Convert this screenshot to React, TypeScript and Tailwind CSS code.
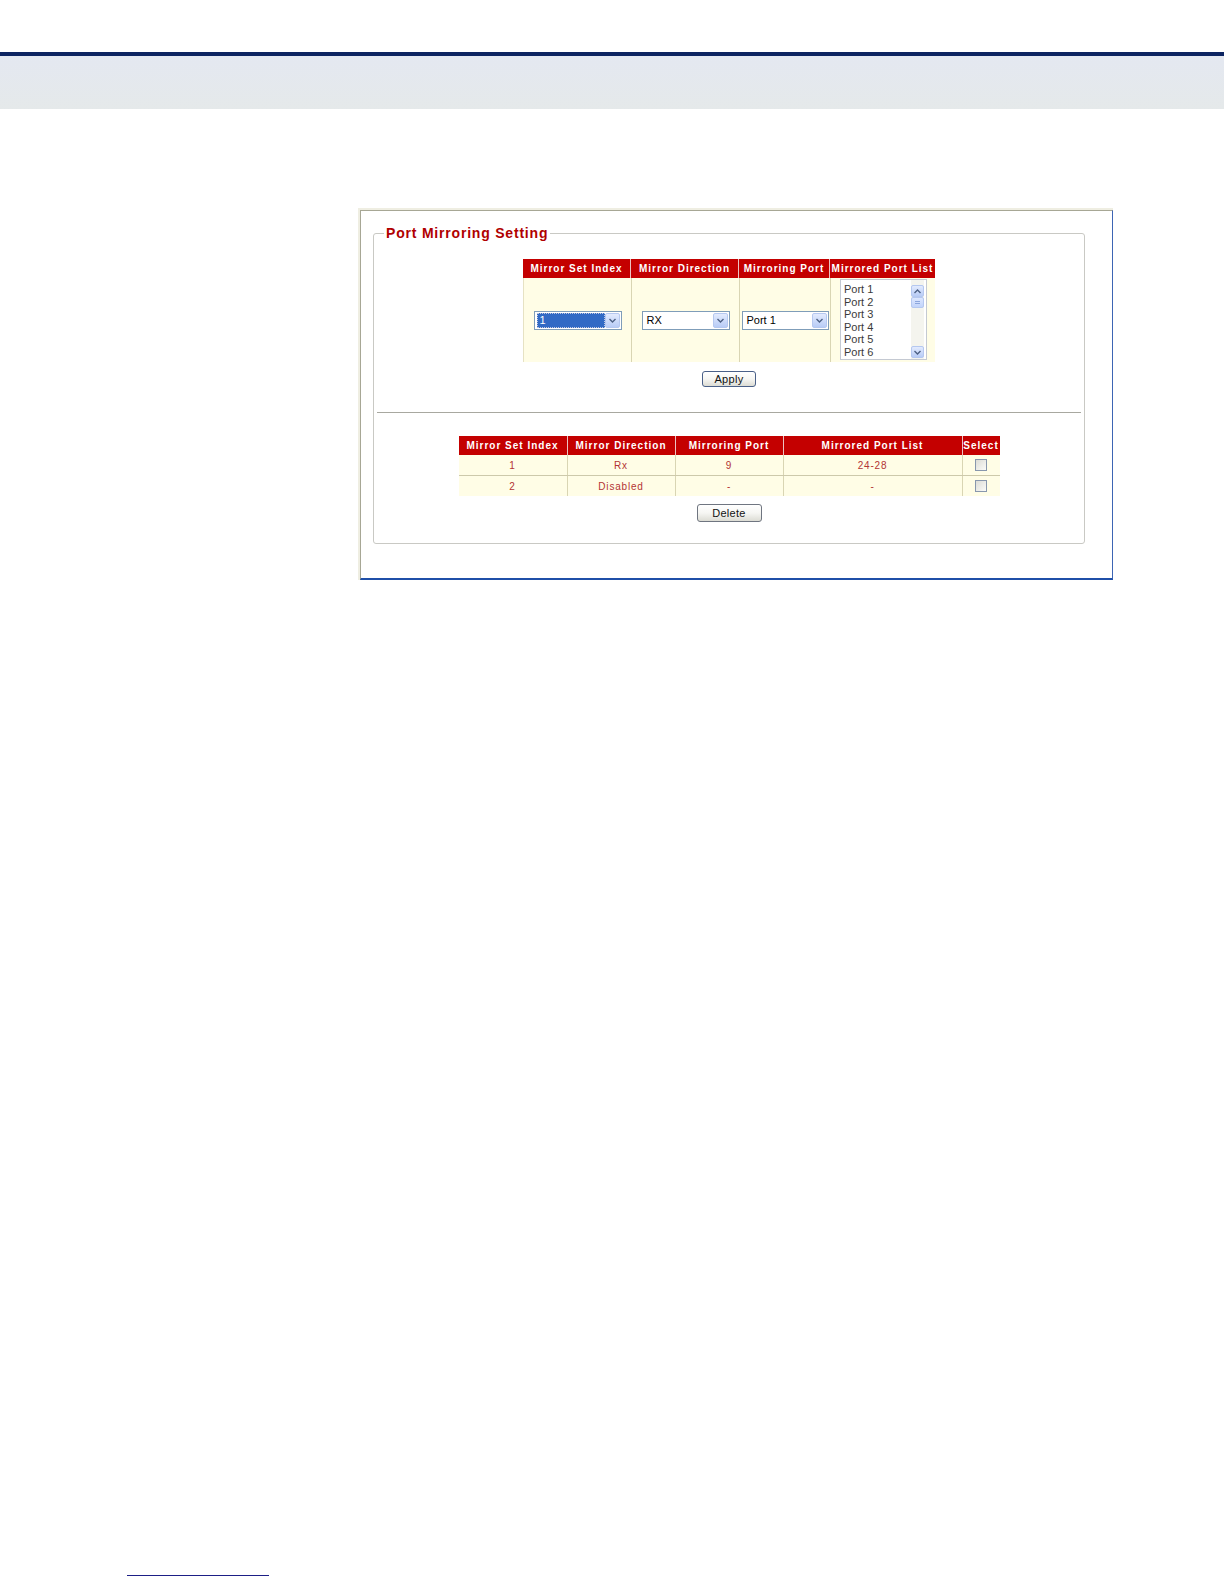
import React from "react";

const F = { fontFamily: '"Liberation Sans", Arial, sans-serif' };

function Chevron({ up = false }: { up?: boolean }) {
  return (
    <svg width="7" height="5" viewBox="0 0 7 5" className="block">
      <path
        d={up ? "M0.5 4 L3.5 1 L6.5 4" : "M0.5 1 L3.5 4 L6.5 1"}
        fill="none"
        stroke="#4d6185"
        strokeWidth="1.4"
      />
    </svg>
  );
}

function ArrowBtn() {
  return (
    <div className="flex h-[15px] w-[15px] shrink-0 items-center justify-center rounded-[2px] border border-[#b5c8f0] bg-gradient-to-b from-[#e3ebfe] to-[#b8ccf6]">
      <Chevron />
    </div>
  );
}

function XPSelect({ value, selected = false, className = "" }: { value: string; selected?: boolean; className?: string }) {
  return (
    <div className={`flex h-[19px] items-center border border-[#7f9db9] bg-white p-[1px] ${className}`}>
      <div className="flex h-full flex-1 items-center pl-[1px]">
        {selected ? (
          <div className="flex h-full w-full items-center border border-dotted border-[#c0c8e0] bg-[#316ac5] pl-[2px] text-[11px] text-white">
            {value}
          </div>
        ) : (
          <div className="pl-[2px] text-[11px] text-black">{value}</div>
        )}
      </div>
      <ArrowBtn />
    </div>
  );
}

function HeadCell({ children, first = false }: { children: React.ReactNode; first?: boolean }) {
  return (
    <div
      className={`flex items-center justify-center overflow-hidden whitespace-nowrap text-[10px] font-bold tracking-[1px] text-white ${first ? "" : "border-l border-[#ecc2c2]"}`}
    >
      {children}
    </div>
  );
}

function Listbox() {
  const ports = ["Port 1", "Port 2", "Port 3", "Port 4", "Port 5", "Port 6"];
  return (
    <div className="flex h-[81px] w-[87px] border border-[#c4c9d2] bg-white">
      <div className="flex-1 overflow-hidden pl-[3px] pt-[3px]">
        {ports.map((p) => (
          <div key={p} className="h-[12.6px] text-[11px] leading-[12.6px] text-[#3a3a3a]">
            {p}
          </div>
        ))}
      </div>
      <div className="mr-[2px] flex w-[13px] flex-col bg-[#f4f4ee] pt-[5px] pb-[1px]">
        <div className="flex h-[12px] w-[13px] items-center justify-center rounded-[2px] border border-[#b5c8f0] bg-gradient-to-b from-[#e3ebfe] to-[#b8ccf6]">
          <Chevron up />
        </div>
        <div className="flex h-[11px] w-[13px] flex-col items-center justify-center gap-[1px] rounded-[2px] border border-[#b5c8f0] bg-gradient-to-b from-[#dde7fe] to-[#c2d4fa]">
          <div className="h-px w-[5px] bg-[#8ca6dd]" />
          <div className="h-px w-[5px] bg-[#8ca6dd]" />
        </div>
        <div className="flex-1" />
        <div className="flex h-[12px] w-[13px] items-center justify-center rounded-[2px] border border-[#b5c8f0] bg-gradient-to-b from-[#e3ebfe] to-[#b8ccf6]">
          <Chevron />
        </div>
      </div>
    </div>
  );
}

function XPButton({ label, className = "", border = "border-[#4a6088]" }: { label: string; className?: string; border?: string }) {
  return (
    <div
      className={`flex items-center justify-center rounded-[3px] border ${border} bg-gradient-to-b from-white via-[#f6f6f3] to-[#dcdcd4] text-[11px] tracking-[0.3px] text-[#111] ${className}`}
    >
      {label}
    </div>
  );
}

function Checkbox() {
  return <div className="h-[12px] w-[12px] border border-[#8897ad] bg-gradient-to-br from-[#dcdcd6] to-[#fbfbf8]" />;
}

export default function App() {
  const dataCls = "flex items-center justify-center text-[10px] tracking-[0.8px] text-[#b33434]";
  const rows = [
    ["1", "Rx", "9", "24-28"],
    ["2", "Disabled", "-", "-"],
  ];
  return (
    <div className="flex min-h-[1584px] w-[1224px] flex-col bg-white" style={F}>
      <div className="h-[52px]" />
      <div className="h-[4px] bg-[#0c2461]" />
      <div className="h-[53px] bg-gradient-to-b from-[#e4e8f1] to-[#e5e9ea]" />

      {/* screenshot frame */}
      <div className="ml-[358px] mt-[99px] w-[755px] border-l-2 border-t-2 border-[#efeee2]">
        <div className="border-b-2 border-l border-r border-t border-b-[#1f4fa8] border-l-[#a7a795] border-r-[#3d65b4] border-t-[#a7a795] bg-white pb-[34px] pt-[14px]">
          <fieldset className="ml-[12px] w-[712px] rounded-[3px] border border-[#c9c9c4] px-[10px] pb-[21px] pt-[18px]">
            <legend className="px-[2px] text-[14px] font-bold leading-[16px] tracking-[0.8px] text-[#b00000]">
              Port Mirroring Setting
            </legend>

            {/* top config table */}
            <div className="mx-auto w-[412px]">
              <div className="grid h-[19px] grid-cols-[107px_108px_91px_106px] bg-[#c40000]">
                <HeadCell first>Mirror Set Index</HeadCell>
                <HeadCell>Mirror Direction</HeadCell>
                <HeadCell>Mirroring Port</HeadCell>
                <HeadCell>Mirrored Port List</HeadCell>
              </div>
              <div className="grid h-[84px] grid-cols-[107px_108px_91px_106px] border-l border-[#e6e2c4] bg-[#fffde6]">
                <div className="flex items-center justify-center">
                  <XPSelect value="1" selected className="w-[88px]" />
                </div>
                <div className="flex items-center justify-center border-l border-[#d9d5b3]">
                  <XPSelect value="RX" className="w-[88px]" />
                </div>
                <div className="flex items-center justify-center border-l border-[#d9d5b3]">
                  <XPSelect value="Port 1" className="w-[87px]" />
                </div>
                <div className="flex items-start justify-center border-l border-[#d9d5b3] pt-[1px]">
                  <Listbox />
                </div>
              </div>
            </div>

            <div className="mt-[9px] flex justify-center">
              <XPButton label="Apply" className="h-[16px] w-[54px]" />
            </div>

            <div className="mx-[-7px] mt-[25px] h-px bg-[#a8a8a0]" />

            {/* bottom list table */}
            <div className="mx-auto mt-[23px] w-[541px]">
              <div className="grid h-[19px] grid-cols-[108px_108px_108px_179px_38px] bg-[#c40000]">
                <HeadCell first>Mirror Set Index</HeadCell>
                <HeadCell>Mirror Direction</HeadCell>
                <HeadCell>Mirroring Port</HeadCell>
                <HeadCell>Mirrored Port List</HeadCell>
                <HeadCell>Select</HeadCell>
              </div>
              {rows.map((r, i) => (
                <div
                  key={i}
                  className={`grid grid-cols-[108px_108px_108px_179px_38px] bg-[#fffde6] ${i === 0 ? "h-[21px] border-b border-[#cdc9ab]" : "h-[20px]"}`}
                >
                  <div className={dataCls}>{r[0]}</div>
                  <div className={`${dataCls} border-l border-[#d9d5b3]`}>{r[1]}</div>
                  <div className={`${dataCls} border-l border-[#d9d5b3]`}>{r[2]}</div>
                  <div className={`${dataCls} border-l border-[#d9d5b3]`}>{r[3]}</div>
                  <div className="flex items-center justify-center border-l border-[#d9d5b3]">
                    <Checkbox />
                  </div>
                </div>
              ))}
            </div>

            <div className="mt-[8px] flex justify-center">
              <XPButton label="Delete" className="h-[18px] w-[65px]" border="border-[#6f7580]" />
            </div>
          </fieldset>
        </div>
      </div>

      <div className="mt-auto mb-[8px] ml-[127px] h-px w-[142px] bg-[#1d1f86]" />
    </div>
  );
}
